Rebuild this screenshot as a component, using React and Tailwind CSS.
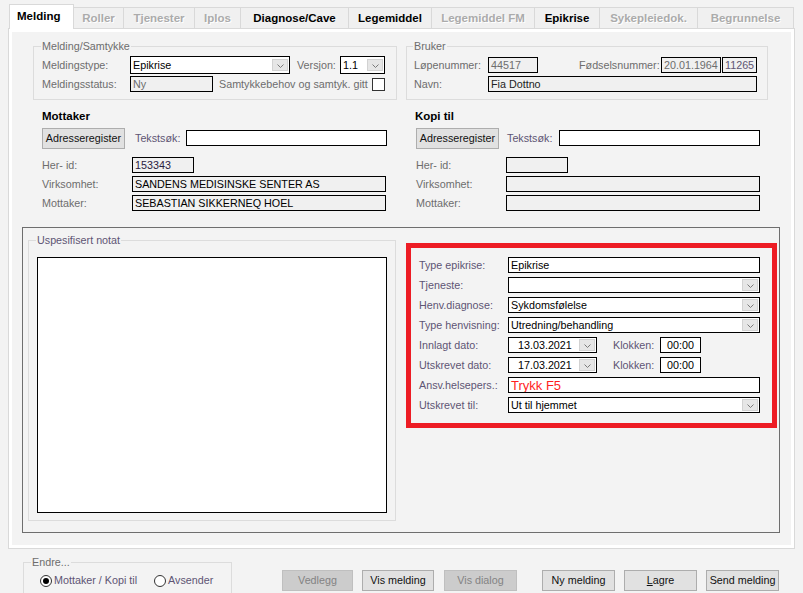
import React from "react";

const tabs = [
  { label: "Melding", w: "w-[65px]", active: true },
  { label: "Roller", w: "w-[50px]", disabled: true },
  { label: "Tjenester", w: "w-[71px]", disabled: true },
  { label: "Iplos", w: "w-[46px]", disabled: true },
  { label: "Diagnose/Cave", w: "w-[108px]" },
  { label: "Legemiddel", w: "w-[83px]" },
  { label: "Legemiddel FM", w: "w-[103px]", disabled: true },
  { label: "Epikrise", w: "w-[65px]" },
  { label: "Sykepleiedok.", w: "w-[98px]", disabled: true },
  { label: "Begrunnelse", w: "w-[96px]", disabled: true },
];

const Chevron = () => (
  <svg width="7" height="4" viewBox="0 0 7 4" className="block">
    <polyline points="0.5,0.5 3.5,3.5 6.5,0.5" fill="none" stroke="#7a7a7a" strokeWidth="1" />
  </svg>
);

function DropButton() {
  return (
    <div className="ml-auto mr-px flex h-[12px] w-[16px] shrink-0 items-end justify-center border border-[#d2d2d2] bg-[#e6e6e6] pb-[2px]">
      <Chevron />
    </div>
  );
}

function Field({ className = "", children }) {
  return (
    <div className={`flex h-[16px] shrink-0 items-center overflow-hidden whitespace-nowrap border border-black px-[2px] leading-none ${className}`}>
      {children}
    </div>
  );
}

function Combo({ className = "", value }) {
  return (
    <div className={`flex shrink-0 items-center whitespace-nowrap border border-black bg-white pl-[2px] leading-none text-black ${className}`}>
      <span>{value}</span>
      <DropButton />
    </div>
  );
}

function Btn({ children, className = "", disabled }) {
  return (
    <div
      className={`flex h-[21px] shrink-0 items-center justify-center whitespace-nowrap border ${
        disabled ? "border-[#bfbfbf] bg-[#cccccc] text-[#838383]" : "border-[#adadad] bg-[#e1e1e1] text-[#111]"
      } ${className}`}
    >
      {children}
    </div>
  );
}

function Label({ className = "", children }) {
  return <div className={`shrink-0 whitespace-nowrap ${className}`}>{children}</div>;
}

function Radio({ checked }) {
  return (
    <div className="flex h-[12px] w-[12px] shrink-0 items-center justify-center rounded-full border border-[#333] bg-white">
      {checked && <div className="h-[6px] w-[6px] rounded-full bg-black" />}
    </div>
  );
}

export default function App() {
  return (
    <div className="h-[593px] w-[803px] overflow-hidden bg-[#f3f3f3] font-['Liberation_Sans',Arial,sans-serif] text-[10.75px] leading-[13px] text-black">
      {/* Tab strip */}
      <div className="flex h-[28px] items-end pl-[9px]">
        {tabs.map((t) =>
          t.active ? (
            <div
              key={t.label}
              className={`relative z-10 -mb-px flex h-[25px] items-center border-x border-t border-[#d9d9d9] bg-white pb-px pl-[7px] text-[11.5px] font-bold ${t.w}`}
            >
              {t.label}
            </div>
          ) : (
            <div
              key={t.label}
              className={`flex h-[21px] items-center justify-center border-r border-t border-[#d9d9d9] bg-[#f0f0f0] text-[11.5px] font-bold ${t.w} ${
                t.disabled ? "text-[#ababab] [text-shadow:1px_1px_0_#fff]" : "text-black"
              }`}
            >
              {t.label}
            </div>
          )
        )}
      </div>

      {/* Tab page */}
      <div className="ml-[8px] h-[521px] w-[787px] border border-[#d9d9d9] bg-white p-[3px]">
        <div className="h-full bg-[#f3f3f3] pl-[21px] pt-[8px]">
          {/* Groups */}
          <div className="flex gap-[9px]">
            <fieldset className="w-[364px] border border-[#dcdcdc] pb-[7px] pl-[8px] pt-[3px]">
              <legend className="ml-[-1px] px-px text-[#6d6d6d]">Melding/Samtykke</legend>
              <div className="flex h-[18px] items-center">
                <Label className="w-[88px] text-[#6d6d6d]">Meldingstype:</Label>
                <Combo className="h-[18px] w-[160px]" value="Epikrise" />
                <Label className="ml-[7px] w-[43px] text-[#6d6d6d]">Versjon:</Label>
                <Combo className="h-[18px] w-[45px]" value="1.1" />
              </div>
              <div className="mt-[2px] flex h-[16px] items-center">
                <Label className="w-[88px] text-[#6d6d6d]">Meldingsstatus:</Label>
                <Field className="w-[83px] bg-[#f0f0f0] text-[#6d6d6d]">Ny</Field>
                <Label className="ml-[6px] w-[153px] text-[#6d6d6d]">Samtykkebehov og samtyk. gitt</Label>
                <div className="h-[13px] w-[13px] border border-[#333] bg-white" />
              </div>
            </fieldset>

            <fieldset className="w-[362px] border border-[#dcdcdc] pb-[7px] pl-[7px] pt-[4px]">
              <legend className="ml-[-1px] px-px text-[#6d6d6d]">Bruker</legend>
              <div className="flex h-[16px] items-center">
                <Label className="w-[74px] text-[#6d6d6d]">Løpenummer:</Label>
                <Field className="w-[50px] bg-[#f0f0f0] text-[#6d6d6d]">44517</Field>
                <Label className="ml-[41px] w-[82px] text-[#6d6d6d]">Fødselsnummer:</Label>
                <Field className="w-[60px] bg-[#f0f0f0] text-[#6d6d6d]">20.01.1964</Field>
                <Field className="ml-px w-[35px] bg-[#f0f0f0] text-[#5e5573]">11265</Field>
              </div>
              <div className="mt-[3px] flex h-[16px] items-center">
                <Label className="w-[74px] text-[#6d6d6d]">Navn:</Label>
                <Field className="w-[269px] bg-[#f0f0f0] text-[#222]">Fia Dottno</Field>
              </div>
            </fieldset>
          </div>

          {/* Mottaker / Kopi til */}
          <div className="mt-[10px] flex pl-[9px]">
            <div className="w-[373px]">
              <div className="h-[13px] text-[11.5px] font-bold">Mottaker</div>
              <div className="mt-[6px] flex h-[18px] items-center">
                <Btn className="h-[18px] w-[83px]">Adresseregister</Btn>
                <Label className="ml-[10px] w-[51px] text-[#5e5573]">Tekstsøk:</Label>
                <Field className="w-[201px] bg-white" />
              </div>
              <div className="mt-[10px] flex h-[16px] items-center">
                <Label className="w-[90px] text-[#6d6d6d]">Her- id:</Label>
                <Field className="w-[62px] bg-[#f0f0f0] text-[#2a2040]">153343</Field>
              </div>
              <div className="mt-[3px] flex h-[16px] items-center">
                <Label className="w-[90px] text-[#6d6d6d]">Virksomhet:</Label>
                <Field className="w-[254px] bg-[#f0f0f0] text-black">SANDENS MEDISINSKE SENTER AS</Field>
              </div>
              <div className="mt-[3px] flex h-[16px] items-center">
                <Label className="w-[90px] text-[#6d6d6d]">Mottaker:</Label>
                <Field className="w-[254px] bg-[#f0f0f0] text-black">SEBASTIAN SIKKERNEQ HOEL</Field>
              </div>
            </div>

            <div className="w-[360px] pl-px">
              <div className="ml-[-1px] h-[13px] text-[11.5px] font-bold">Kopi til</div>
              <div className="mt-[6px] flex h-[18px] items-center">
                <Btn className="h-[18px] w-[83px]">Adresseregister</Btn>
                <Label className="ml-[8px] w-[52px] text-[#5e5573]">Tekstsøk:</Label>
                <Field className="w-[201px] bg-white" />
              </div>
              <div className="mt-[10px] flex h-[16px] items-center">
                <Label className="w-[90px] text-[#6d6d6d]">Her- id:</Label>
                <Field className="w-[62px] bg-[#f0f0f0]" />
              </div>
              <div className="mt-[3px] flex h-[16px] items-center">
                <Label className="w-[90px] text-[#6d6d6d]">Virksomhet:</Label>
                <Field className="w-[254px] bg-[#f0f0f0]" />
              </div>
              <div className="mt-[3px] flex h-[16px] items-center">
                <Label className="w-[90px] text-[#6d6d6d]">Mottaker:</Label>
                <Field className="w-[254px] bg-[#f0f0f0]" />
              </div>
            </div>
          </div>

          {/* Epikrise frame */}
          <div className="ml-[-11px] mt-[16px] flex h-[306px] w-[758px] items-start border border-[#6e6e6e] pl-[5px] pt-[6px]">
            <fieldset className="h-[287px] w-[368px] border border-[#dcdcdc] pl-[8px]">
              <legend className="ml-[-1px] px-px text-[#5e5573]">Uspesifisert notat</legend>
              <div className="mt-[10px] h-[256px] w-[350px] border border-black bg-white" />
            </fieldset>

            <div className="ml-[10px] mt-[9px] h-[185px] w-[371px] border-[5px] border-[#ed1c24] pl-[8px] pt-[9px]">
              <div className="flex flex-col gap-[4px]">
                <div className="flex h-[16px] items-center">
                  <Label className="w-[89px] text-[#5e5573]">Type epikrise:</Label>
                  <Field className="w-[252px] bg-white text-black">Epikrise</Field>
                </div>
                <div className="flex h-[16px] items-center">
                  <Label className="w-[89px] text-[#5e5573]">Tjeneste:</Label>
                  <Combo className="h-[16px] w-[252px]" value="" />
                </div>
                <div className="flex h-[16px] items-center">
                  <Label className="w-[89px] text-[#5e5573]">Henv.diagnose:</Label>
                  <Combo className="h-[16px] w-[252px]" value="Sykdomsfølelse" />
                </div>
                <div className="flex h-[16px] items-center">
                  <Label className="w-[89px] text-[#5e5573]">Type henvisning:</Label>
                  <Combo className="h-[16px] w-[252px]" value="Utredning/behandling" />
                </div>
                <div className="flex h-[16px] items-center">
                  <Label className="w-[89px] text-[#5e5573]">Innlagt dato:</Label>
                  <div className="flex h-[16px] w-[89px] items-center border border-black bg-white pl-[9px]">
                    <span>13.03.2021</span>
                    <DropButton />
                  </div>
                  <Label className="ml-[16px] w-[47px] text-[#5e5573]">Klokken:</Label>
                  <Field className="w-[41px] justify-center bg-white">00:00</Field>
                </div>
                <div className="flex h-[16px] items-center">
                  <Label className="w-[89px] text-[#5e5573]">Utskrevet dato:</Label>
                  <div className="flex h-[16px] w-[89px] items-center border border-black bg-white pl-[9px]">
                    <span>17.03.2021</span>
                    <DropButton />
                  </div>
                  <Label className="ml-[16px] w-[47px] text-[#5e5573]">Klokken:</Label>
                  <Field className="w-[41px] justify-center bg-white">00:00</Field>
                </div>
                <div className="flex h-[16px] items-center">
                  <Label className="w-[89px] text-[#5e5573]">Ansv.helsepers.:</Label>
                  <Field className="w-[252px] bg-white text-[13px] text-[#ff1f1f]">Trykk F5</Field>
                </div>
                <div className="flex h-[16px] items-center">
                  <Label className="w-[89px] text-[#5e5573]">Utskrevet til:</Label>
                  <Combo className="h-[16px] w-[252px]" value="Ut til hjemmet" />
                </div>
              </div>
            </div>
          </div>
        </div>
      </div>

      {/* Bottom bar */}
      <div className="flex items-start">
        <fieldset className="ml-[23px] mt-[7px] h-[50px] w-[209px] border border-[#dcdcdc] pl-[16px]">
          <legend className="ml-[-9px] px-px text-[#6d6d6d]">Endre...</legend>
          <div className="mt-[5px] flex items-center">
            <Radio checked />
            <span className="ml-[2px] text-[#5e5573]">Mottaker / Kopi til</span>
            <div className="ml-[17px]">
              <Radio />
            </div>
            <span className="ml-[2px] text-[#5e5573]">Avsender</span>
          </div>
        </fieldset>

        <div className="ml-[50px] mt-[21px] flex">
          <Btn className="w-[71px]" disabled>Vedlegg</Btn>
          <Btn className="ml-[9px] w-[72px]">Vis melding</Btn>
          <Btn className="ml-[10px] w-[73px]" disabled>Vis dialog</Btn>
          <Btn className="ml-[25px] w-[73px]">Ny melding</Btn>
          <Btn className="ml-[9px] w-[73px]">
            <span className="underline">L</span>agre
          </Btn>
          <Btn className="ml-[9px] w-[73px]">Send melding</Btn>
        </div>
      </div>
    </div>
  );
}
